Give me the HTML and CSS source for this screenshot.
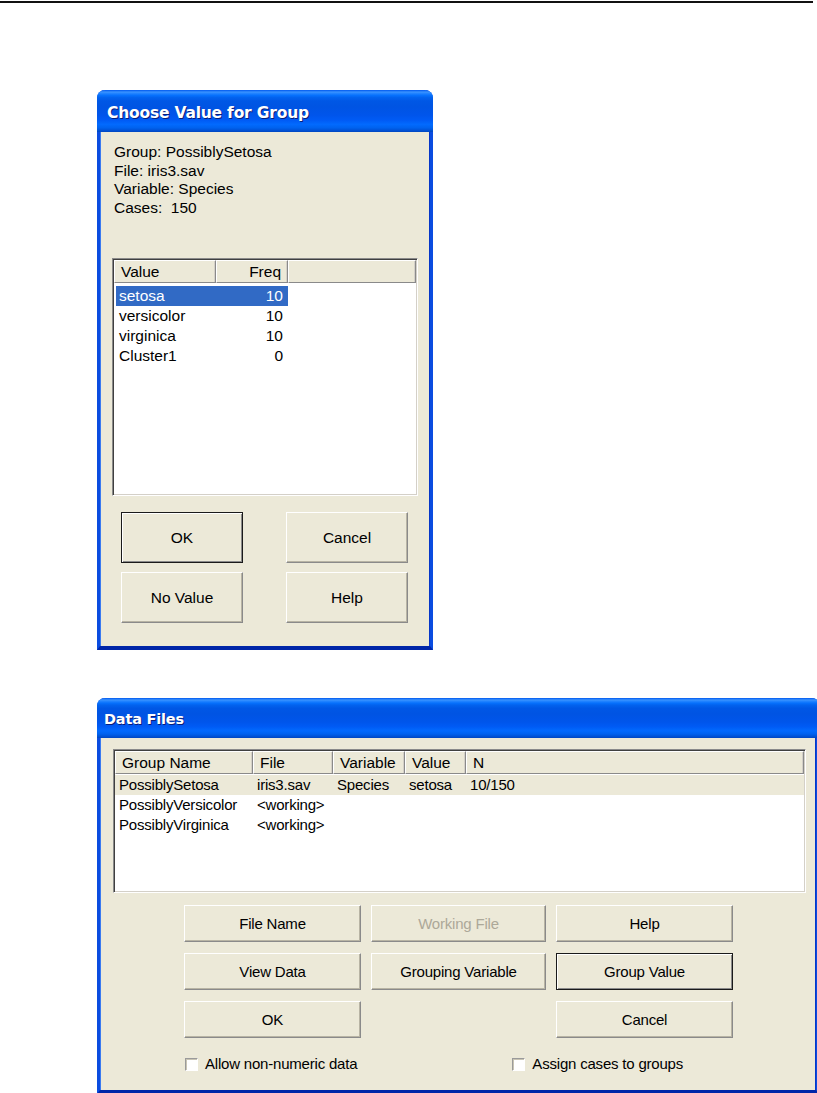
FILE: index.html
```html
<!DOCTYPE html>
<html lang="en">
<head>
  <meta charset="UTF-8">
  <title>Choose Value for Group</title>
  <link rel="stylesheet" href="styles.css">
</head>
<body>

<div class="rule"></div>

<div class="window choose">
  <div class="titlebar">Choose Value for Group</div>
  <div class="body">
    <div class="info">
      <div>Group: PossiblySetosa</div>
      <div>File: iris3.sav</div>
      <div>Variable: Species</div>
      <div>Cases:&nbsp; 150</div>
    </div>

    <div class="listbox value-list">
      <div class="lv-head">
        <span class="hcell">Value</span>
        <span class="hcell num">Freq</span>
        <span class="hcell"></span>
      </div>
      <div class="lv-rows">
        <div class="lv-row selected"><span>setosa</span><span class="num">10</span></div>
        <div class="lv-row"><span>versicolor</span><span class="num">10</span></div>
        <div class="lv-row"><span>virginica</span><span class="num">10</span></div>
        <div class="lv-row"><span>Cluster1</span><span class="num">0</span></div>
      </div>
    </div>

    <div class="buttons choose-buttons">
      <button class="btn default">OK</button>
      <button class="btn">Cancel</button>
      <button class="btn">No Value</button>
      <button class="btn">Help</button>
    </div>
  </div>
</div>

<div class="window files">
  <div class="titlebar">Data Files</div>
  <div class="body">
    <div class="listbox files-list">
      <div class="lv-head">
        <span class="hcell">Group Name</span>
        <span class="hcell">File</span>
        <span class="hcell">Variable</span>
        <span class="hcell">Value</span>
        <span class="hcell">N</span>
      </div>
      <div class="lv-rows">
        <div class="lv-row current">
          <span>PossiblySetosa</span><span>iris3.sav</span><span>Species</span><span>setosa</span><span>10/150</span>
        </div>
        <div class="lv-row">
          <span>PossiblyVersicolor</span><span>&lt;working&gt;</span><span></span><span></span><span></span>
        </div>
        <div class="lv-row">
          <span>PossiblyVirginica</span><span>&lt;working&gt;</span><span></span><span></span><span></span>
        </div>
      </div>
    </div>

    <div class="buttons files-buttons">
      <button class="btn">File Name</button>
      <button class="btn" disabled>Working File</button>
      <button class="btn">Help</button>
      <button class="btn">View Data</button>
      <button class="btn">Grouping Variable</button>
      <button class="btn default">Group Value</button>
      <button class="btn">OK</button>
      <span></span>
      <button class="btn">Cancel</button>
    </div>

    <div class="checks">
      <label class="check"><span class="box"></span>Allow non-numeric data</label>
      <label class="check"><span class="box"></span>Assign cases to groups</label>
    </div>
  </div>
</div>

</body>
</html>
```

FILE: styles.css
```css
body {
  margin: 0;
  background: #fff;
  font-family: 'Liberation Sans', Arial, sans-serif;
  font-size: 15.5px;
  color: #000;
}
.rule {
  margin: 1px 4px 0 0;
  border-top: 2px solid #111;
}

/* XP style window */
.window {
  margin-left: 97px;
  background-color: #ECE9D8;
  border: 3px solid #0A4CE0;
  border-top: none;
  border-bottom: 4px solid #0026A8;
  border-radius: 8px 8px 0 0;
  box-shadow: inset 1px 0 0 #3A7AF0, inset -1px 0 0 #0636C8;
}
.choose {
  margin-top: 87px;
  width: 330px;
}
.files {
  margin-top: 48px;
  width: 716px;
  border-right-width: 4px;
}
.titlebar {
  margin: 0 -3px;
  height: 42px;
  padding-left: 10px;
  border-radius: 8px 8px 0 0;
  background: linear-gradient(to bottom, #0058EE 0%, #3A93FF 5%, #1C80FF 9%, #0670FC 13%, #0262EE 18%, #0057E5 26%, #0054E3 40%, #0055EB 60%, #005BF5 72%, #026AFE 82%, #0062EF 90%, #0052D6 96%, #0046C0 100%);
  color: #fff;
  font-family: 'DejaVu Sans', Verdana, sans-serif;
  font-weight: bold;
  font-size: 15.5px;
  line-height: 46px;
  letter-spacing: -0.2px;
  text-shadow: 1px 1px 0 #0A1E7A;
}
.files .titlebar {
  height: 40px;
  line-height: 42px;
  padding-left: 7px;
  font-size: 14.5px;
  margin-right: -4px;
}
.choose .body {
  padding: 11px 12px 23px;
}
.files .body {
  padding: 11px 10px 19px 13px;
}
.info {
  padding-left: 2px;
  line-height: 18.5px;
}

/* list views */
.listbox {
  background: #fff;
  border: 1px solid;
  border-color: #8a8a8a #fff #fff #8a8a8a;
  box-shadow: inset 1px 1px 0 #404040, inset -1px -1px 0 #d4d0c8;
  padding: 1px;
}
.value-list {
  margin-top: 41px;
  height: 234px;
}
.files-list {
  height: 140px;
}
.lv-head {
  display: grid;
  height: 23px;
  background: #ECE9D8;
}
.value-list .lv-head,
.value-list .lv-row {
  grid-template-columns: 102px 72px 1fr;
}
.files-list .lv-head,
.files-list .lv-row {
  grid-template-columns: 138px 80px 72px 61px 1fr;
}
.hcell {
  border-left: 1px solid #fff;
  border-right: 1px solid #8a8a8a;
  border-bottom: 1px solid #8a8a8a;
  border-top: 1px solid #fff;
  box-shadow: inset -1px 0 0 #d4d0c8;
  padding: 0 6px;
  line-height: 21px;
  white-space: nowrap;
  overflow: hidden;
}
.num {
  text-align: right;
}
.value-list .lv-rows {
  padding: 3px 0 0 2px;
}
.lv-row {
  display: grid;
  height: 20px;
  line-height: 20px;
  white-space: nowrap;
}
.value-list .lv-row {
  width: 172px;
}
.value-list .lv-row span {
  padding: 0 7px 0 3px;
}
.lv-row.selected {
  background: #316AC5;
  color: #fff;
}
.files-list .lv-rows {
  padding-top: 1px;
}
.files-list .lv-row {
  font-size: 15px;
  letter-spacing: -0.2px;
}
.files-list .lv-row span {
  padding-left: 4px;
}
.lv-row.current {
  background: #ECE9D8;
}

/* buttons */
.buttons {
  display: grid;
}
.choose-buttons {
  margin: 16px 0 0 9px;
  grid-template-columns: 122px 122px;
  grid-auto-rows: 51px;
  column-gap: 43px;
  row-gap: 9px;
}
.files-buttons {
  margin: 12px 0 0 71px;
  grid-template-columns: 177px 175px 177px;
  grid-auto-rows: 37px;
  column-gap: 10px;
  row-gap: 11px;
}
.btn {
  font-family: 'Liberation Sans', Arial, sans-serif;
  font-size: 15.5px;
  color: #000;
  background-color: #ECE9D8;
  border: 1px solid;
  border-color: #fff #8a8a8a #8a8a8a #fff;
  box-shadow: inset -1px -1px 0 #b8b4a4;
  padding: 0;
  cursor: pointer;
}
.files-buttons .btn {
  font-size: 15px;
  letter-spacing: -0.2px;
}
.btn.default {
  border-color: #1a1a1a;
  box-shadow: inset 1px 1px 0 #fff, inset -1px -1px 0 #8a8a8a;
}
.btn:disabled {
  color: #aca899;
  cursor: default;
}

/* checkboxes */
.checks {
  display: flex;
  margin: 19px 0 0 72px;
  font-size: 15px;
  letter-spacing: -0.2px;
}
.check {
  display: flex;
  align-items: center;
  gap: 7px;
  line-height: 14px;
}
.check + .check {
  margin-left: 155px;
}
.box {
  width: 11px;
  height: 11px;
  background: #fff;
  border: 1px solid;
  border-color: #9a9a9a #fff #fff #9a9a9a;
  box-shadow: inset 1px 1px 0 #c8c4b4;
}
```
